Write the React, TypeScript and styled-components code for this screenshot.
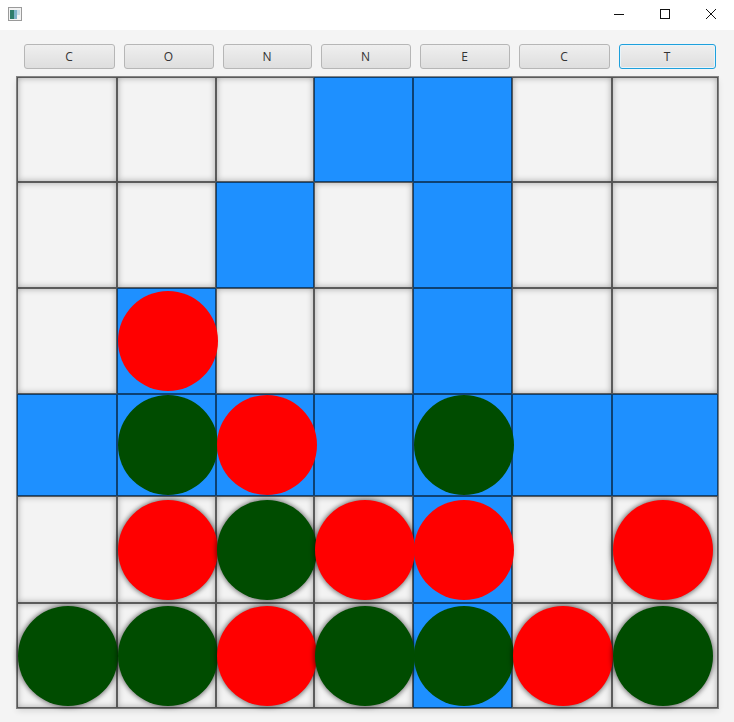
import styled, { createGlobalStyle } from "styled-components"

type Piece = '' | 'r' | 'g'

const COLUMNS = '100px 99px 98px 99px 99px 100px 106px'
const ROWS = '105px 106px 106px 102px 107px 105px'
const LETTERS = ['C', 'O', 'N', 'N', 'E', 'C', 'T']

// rows of the board, top to bottom
const pieces: Piece[][] = [
  ['', '', '', '', '', '', ''],
  ['', '', '', '', '', '', ''],
  ['', 'r', '', '', '', '', ''],
  ['', 'g', 'r', '', 'g', '', ''],
  ['', 'r', 'g', 'r', 'r', '', 'r'],
  ['g', 'g', 'r', 'g', 'g', 'r', 'g'],
]

const highlight: number[][] = [
  [0, 0, 0, 1, 1, 0, 0],
  [0, 0, 1, 0, 1, 0, 0],
  [0, 1, 0, 0, 1, 0, 0],
  [1, 1, 1, 1, 1, 1, 1],
  [0, 0, 0, 0, 1, 0, 0],
  [0, 0, 0, 0, 1, 0, 0],
]

export default function App() {
  return (
    <>
      <GlobalStyle />
      <Window>
        <TitleBar>
          <AppIcon viewBox="0 0 14 14">
            <rect x="0.5" y="0.5" width="13" height="13" fill="#f2f2f2" stroke="#9a9a9a" />
            <rect x="2" y="3" width="4" height="9" fill="#2e7d6b" />
            <rect x="6" y="3" width="3" height="9" fill="#7fb3c9" />
            <rect x="9" y="3" width="3" height="5" fill="#c9dde6" />
          </AppIcon>
          <Spacer />
          <WinButton>
            <svg width="12" height="12" viewBox="0 0 12 12">
              <line x1="1" y1="6.5" x2="11" y2="6.5" stroke="#111" strokeWidth="1" />
            </svg>
          </WinButton>
          <WinButton>
            <svg width="12" height="12" viewBox="0 0 12 12">
              <rect x="1.5" y="1.5" width="9" height="9" fill="none" stroke="#111" strokeWidth="1" />
            </svg>
          </WinButton>
          <WinButton>
            <svg width="12" height="12" viewBox="0 0 12 12">
              <path d="M1 1 L11 11 M11 1 L1 11" stroke="#111" strokeWidth="1" />
            </svg>
          </WinButton>
        </TitleBar>

        <Content>
          <ButtonRow>
            {LETTERS.map((l, i) => (
              <LetterButton key={i} focused={i === 6}>{l}</LetterButton>
            ))}
          </ButtonRow>

          <Board>
            {pieces.map((row, r) =>
              row.map((p, c) => {
                const lit = highlight[r][c] === 1
                return (
                  <Cell key={r + '-' + c} lit={lit}>
                    {p && <Disc color={p === 'r' ? '#ff0000' : '#004c00'} lit={lit} />}
                  </Cell>
                )
              })
            )}
          </Board>
        </Content>
      </Window>
    </>
  )
}

const GlobalStyle = createGlobalStyle`
  html, body {
    margin: 0;
    padding: 0;
    background: #f4f4f4;
    font-family: "Open Sans", "Liberation Sans", sans-serif;
  }
`
const Window = styled.div`
  width: 734px;
  height: 722px;
  overflow: hidden;
  background: #f4f4f4;
`
const TitleBar = styled.div`
  height: 30px;
  background: #fff;
  display: flex;
  align-items: center;
  padding-left: 8px;
`
const AppIcon = styled.svg`
  width: 14px;
  height: 14px;
  margin-top: -2px;
`
const Spacer = styled.div`
  flex: 1;
`
const WinButton = styled.div`
  width: 46px;
  height: 30px;
  display: flex;
  align-items: center;
  justify-content: center;
  margin-top: -3px;
`
const Content = styled.div`
  padding: 14px 0 0 17px;
`
const ButtonRow = styled.div`
  display: grid;
  grid-template-columns: ${COLUMNS};
  height: 25px;
  margin-bottom: 8px;
  padding-left: 2px;
`
const LetterButton = styled.div<{ focused?: boolean }>`
  justify-self: center;
  width: calc(100% - 9px);
  box-sizing: border-box;
  height: 25px;
  display: flex;
  align-items: center;
  justify-content: center;
  border-radius: 3px;
  font-size: 12px;
  color: #333;
  background: linear-gradient(#efefef, #dedede);
  border: 1px solid ${(p) => (p.focused ? '#1ea0dc' : '#b6b6b6')};
  box-shadow: ${(p) => (p.focused ? 'inset 0 0 0 1px #e8f4fa' : 'none')};
`
const Board = styled.div`
  display: grid;
  grid-template-columns: ${COLUMNS};
  grid-template-rows: ${ROWS};
  width: max-content;
  box-shadow: 0 0 0 1px rgba(0, 0, 0, 0.45), 0 3px 6px rgba(0, 0, 0, 0.12);
`
const Cell = styled.div<{ lit: boolean }>`
  display: flex;
  align-items: center;
  justify-content: flex-start;
  background: ${(p) => (p.lit ? '#1e90ff' : '#f3f3f3')};
  box-shadow: ${(p) =>
    p.lit
      ? 'inset 0 0 0 1px rgba(0, 0, 0, 0.55)'
      : 'inset 0 0 0 1px rgba(0, 0, 0, 0.55), inset 0 0 6px 1px rgba(0, 0, 0, 0.3)'};
`
const Disc = styled.div<{ color: string; lit: boolean }>`
  position: relative;
  z-index: 1;
  flex: none;
  width: 100px;
  height: 100px;
  margin-left: 1px;
  border-radius: 50%;
  background: ${(p) => p.color};
  box-shadow: ${(p) => (p.lit ? 'none' : '0 0 5px 1px rgba(0, 0, 0, 0.55)')};
`
